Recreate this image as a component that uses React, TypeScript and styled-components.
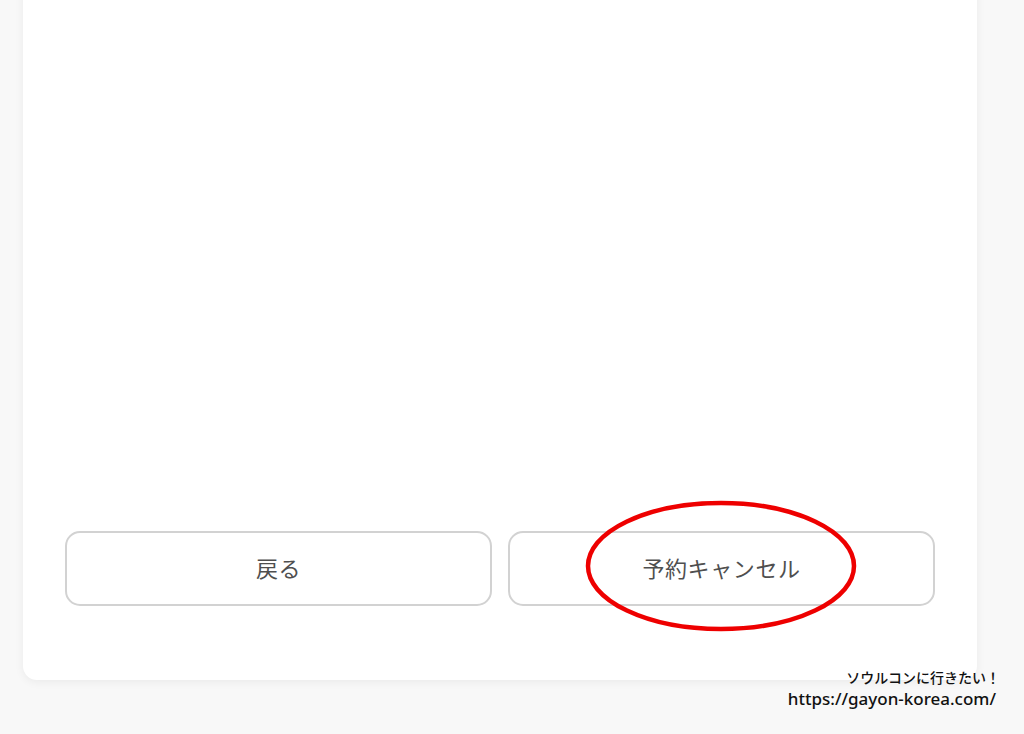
import React from "react";
import styled, { createGlobalStyle } from "styled-components";

const Global = createGlobalStyle`
  html, body { margin: 0; padding: 0; background: #f8f8f8; }
  body { font-family: "Noto Sans CJK JP", "Noto Sans", sans-serif; }
  #root { height: 734px; overflow: hidden; }
`;

const Page = styled.div`
  position: relative;
  height: 734px;
  display: flex;
  flex-direction: column;
  padding: 0 47px 54px 23px;
  box-sizing: border-box;
`;

const Card = styled.div`
  flex: 1;
  margin-top: -20px;
  background: #ffffff;
  border-radius: 14px;
  box-shadow: 0 2px 10px rgba(0, 0, 0, 0.06);
  display: flex;
  flex-direction: column;
  justify-content: flex-end;
  padding: 0 42px 74px;
`;

const ButtonRow = styled.div`
  display: grid;
  grid-template-columns: 1fr 1fr;
  gap: 16px;
`;

const Button = styled.button`
  height: 75px;
  background: #fff;
  border: 2px solid #d2d2d2;
  border-radius: 15px;
  color: #4f4f4f;
  font-family: "Noto Sans CJK JP", "Noto Sans", sans-serif;
  font-size: 22px;
  letter-spacing: 0.6px;
  padding: 0 0 4px;
  display: flex;
  align-items: center;
  justify-content: center;
`;

const Annotation = styled.svg`
  position: absolute;
  left: 584px;
  top: 498px;
  pointer-events: none;
`;

const Watermark = styled.div`
  position: absolute;
  right: 28px;
  top: 666px;
  text-align: right;
  color: #111;
  font-weight: 500;
  line-height: 22px;
`;

const WmTitle = styled.div`
  font-family: "Noto Sans CJK JP", sans-serif;
  font-size: 14px;
  margin-right: -4px;
`;

const WmUrl = styled.div`
  font-family: "Noto Sans", sans-serif;
  font-size: 17px;
`;

export default function App() {
  return (
    <>
      <Global />
      <Page>
        <Card>
          <ButtonRow>
            <Button>戻る</Button>
            <Button>予約キャンセル</Button>
          </ButtonRow>
        </Card>
        <Annotation width="276" height="138" viewBox="0 0 276 138">
          <ellipse cx="137" cy="68" rx="133" ry="63" fill="none" stroke="#ee0000" strokeWidth="4.5" />
        </Annotation>
        <Watermark>
          <WmTitle>ソウルコンに行きたい！</WmTitle>
          <WmUrl>https://gayon-korea.com/</WmUrl>
        </Watermark>
      </Page>
    </>
  );
}
